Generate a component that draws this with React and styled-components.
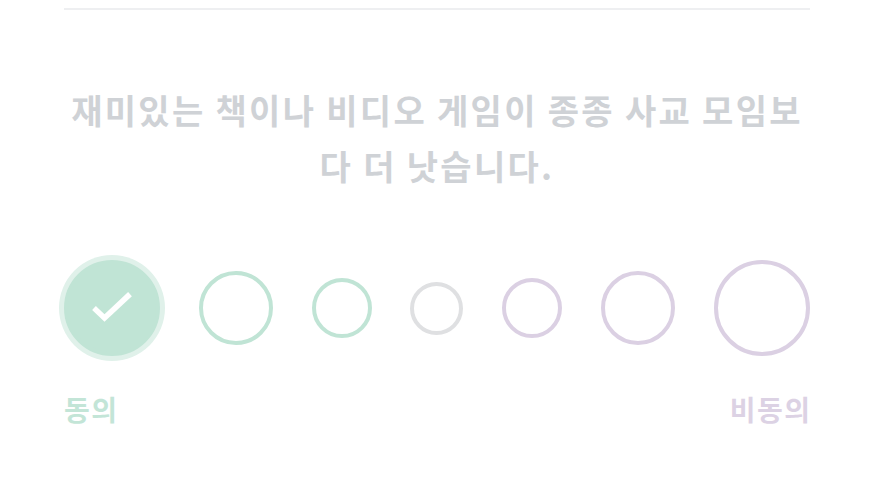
import React from "react";
import styled, { createGlobalStyle } from "styled-components";

const Global = createGlobalStyle`
  html, body { margin: 0; padding: 0; background: #ffffff; }
  body { font-family: "Noto Sans CJK KR", "Noto Sans", sans-serif; }
`;

const Page = styled.div`
  padding: 8px 60px 0 64px;
  width: 746px;
`;

const Divider = styled.div`
  height: 2px;
  background: #eeeff1;
`;

const Question = styled.p`
  margin: 72px -20px 0;
  text-align: center;
  font-size: 34px;
  line-height: 56px;
  font-weight: 700;
  letter-spacing: 2.3px;
  color: #cfd2d6;
`;

const Scale = styled.div`
  margin-top: 66px;
  height: 96px;
  display: flex;
  align-items: center;
  justify-content: space-between;
`;

const Option = styled.button`
  box-sizing: border-box;
  width: ${(p) => p.size}px;
  height: ${(p) => p.size}px;
  border-radius: 50%;
  border: 4px solid ${(p) => p.color};
  background: ${(p) => (p.selected ? p.color : "#ffffff")};
  box-shadow: ${(p) => (p.selected ? "0 0 0 5px #e0f1ea" : "none")};
  padding: 0;
  display: flex;
  align-items: center;
  justify-content: center;
  cursor: pointer;
`;

const Labels = styled.div`
  margin-top: 38px;
  display: flex;
  justify-content: space-between;
  font-size: 28px;
  line-height: 30px;
  font-weight: 700;
`;

const Label = styled.span`
  color: ${(p) => p.color};
  letter-spacing: 1.5px;
  margin-right: ${(p) => (p.end ? "-1.5px" : "0")};
`;

const GREEN = "#c0e4d5";
const GRAY = "#dfe0e2";
const PURPLE = "#dbd0e3";

const options = [
  { size: 96, color: GREEN, selected: true },
  { size: 74, color: GREEN },
  { size: 60, color: GREEN },
  { size: 53, color: GRAY },
  { size: 60, color: PURPLE },
  { size: 74, color: PURPLE },
  { size: 96, color: PURPLE },
];

const Check = () => (
  <svg width="42" height="34" viewBox="0 0 42 34" fill="none">
    <path d="M5 19 L13.5 27 L37 5" stroke="#ffffff" strokeWidth="5.5" strokeLinecap="square" strokeLinejoin="miter" />
  </svg>
);

export default function App() {
  return (
    <>
      <Global />
      <Page>
        <Divider />
        <Question>
          재미있는 책이나 비디오 게임이 종종 사교 모임보
          <br />다 더 낫습니다.
        </Question>
        <Scale>
          {options.map((o, i) => (
            <Option key={i} size={o.size} color={o.color} selected={o.selected}>
              {o.selected && <Check />}
            </Option>
          ))}
        </Scale>
        <Labels>
          <Label color="#c3e5d7">동의</Label>
          <Label color="#dcd2e4" end>비동의</Label>
        </Labels>
      </Page>
    </>
  );
}
